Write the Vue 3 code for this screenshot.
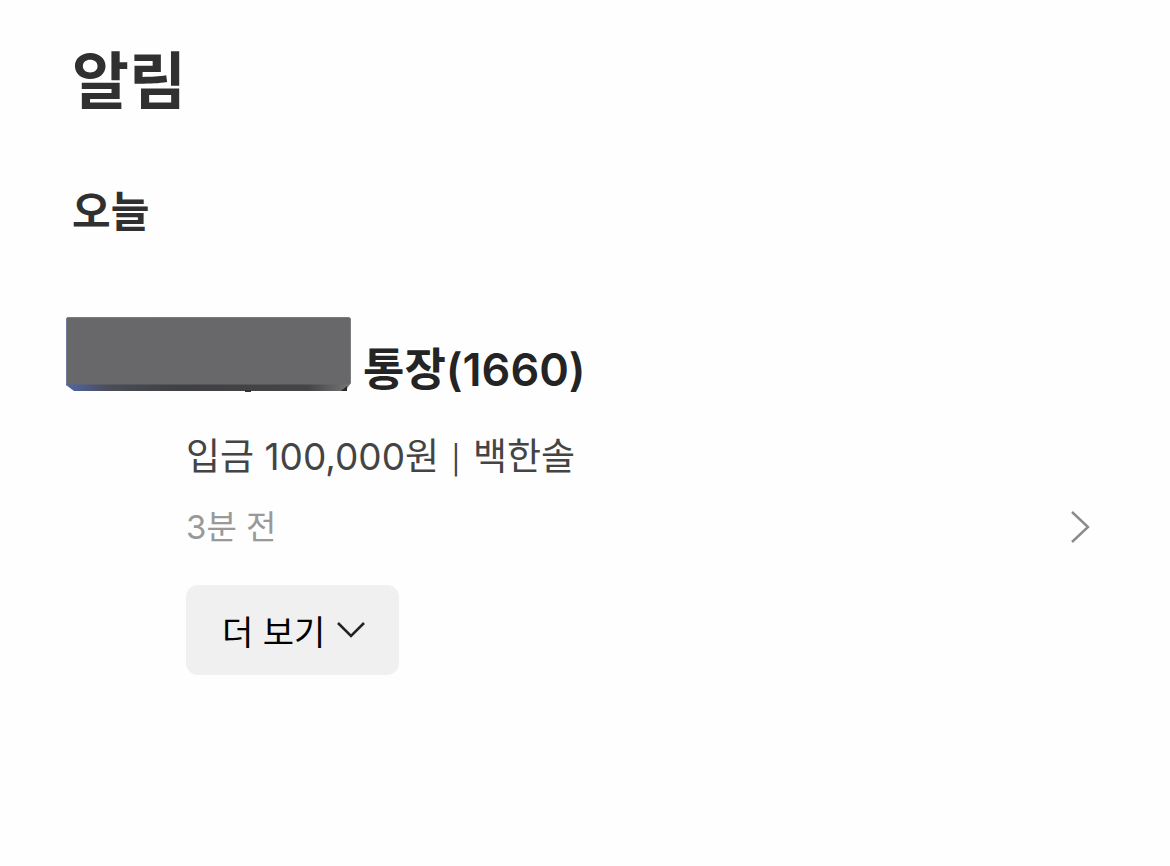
<script setup>
import { ref } from 'vue';

const days = ref([
    {
        "nev": "오늘",
        "items": [
            {
                "id": 1,
                "account": "통장(1660)",
                "text": "입금 100,000원",
                "sender": "백한솔",
                "time": "3분 전"
            }
        ]
    }
])
</script>
<template>
    <main class="page">
        <h1>알림</h1>
        <section v-for="day in days" :key="day.nev">
            <h2>{{ day.nev }}</h2>
            <article v-for="item in day.items" :key="item.id">
                <div class="titleRow">
                    <svg class="mask" viewBox="0 0 285 76" aria-hidden="true">
                        <defs>
                            <linearGradient id="edge">
                                <stop offset="0" stop-color="#5066a8" />
                                <stop offset="0.15" stop-color="#4a4c58" />
                                <stop offset="0.4" stop-color="#3f4043" />
                                <stop offset="0.85" stop-color="#454547" />
                                <stop offset="1" stop-color="#77777a" />
                            </linearGradient>
                        </defs>
                        <path d="M0 66H285L279 74H8L0 68Z" fill="url(#edge)" />
                        <path d="M275 74L281 69V74Z" fill="#29292b" />
                        <rect x="179" y="73" width="6" height="2" fill="#333335" />
                        <rect x="0.5" y="0.5" width="284" height="67" rx="2" fill="#68686a" />
                        <path d="M85 0.5H282Q284.5 0.5 284.5 2V66" stroke="#7b7b7e" fill="none" />
                        <path d="M0.5 67V2Q0.5 0.5 2 0.5H85" stroke="#717c9c" fill="none" />
                    </svg>
                    <h3>{{ item.account }}</h3>
                </div>
                <div class="body">
                    <p class="text">{{ item.text }} <span class="bar">|</span> {{ item.sender }}</p>
                    <div class="timeRow">
                        <p class="time">{{ item.time }}</p>
                        <a href="#" class="goBtn" aria-label="상세 보기">
                            <svg width="20" height="32" viewBox="0 0 20 32">
                                <path d="M2 1L18 16L2 31" fill="none" stroke="#8b8b8b" stroke-width="2.4" />
                            </svg>
                        </a>
                    </div>
                    <button type="button" class="moreBtn">
                        더 보기
                        <svg width="28" height="18" viewBox="0 0 28 18">
                            <path d="M1 2L14 15L27 2" fill="none" stroke="#242424" stroke-width="2.6" />
                        </svg>
                    </button>
                </div>
            </article>
        </section>
    </main>
</template>
<style>
body {
    margin: 0;
    background-color: #fefefe;
}
</style>
<style scoped>
.page {
    padding: 38px 80px 80px 72px;
    font-family: Inter, "Noto Sans CJK KR", sans-serif;
    color: #303030;
}

h1,
h2,
h3,
p {
    margin: 0;
}

h1 {
    font-size: 62px;
    line-height: 88px;
    font-weight: 700;
}

h2 {
    margin-top: 56px;
    font-size: 42px;
    line-height: 60px;
    font-weight: 700;
}

article {
    margin-top: 75px;
}

.titleRow {
    display: flex;
    align-items: flex-start;
    gap: 12px;
    margin-left: -6px;
}

.mask {
    width: 285px;
    height: 76px;
    flex: none;
}

h3 {
    margin-top: 21px;
    font-size: 45px;
    line-height: 64px;
    font-weight: 600;
    color: #242424;
}

.body {
    margin-top: 27px;
    padding-left: 114px;
}

.text {
    font-size: 37px;
    line-height: 56px;
    color: #444444;
}

.bar {
    display: inline-block;
    width: 13px;
    font-size: 28px;
    line-height: 36px;
    text-align: center;
}

.timeRow {
    display: flex;
    justify-content: space-between;
    align-items: center;
    margin-top: 14px;
}

.time {
    font-size: 33px;
    line-height: 56px;
    color: #999999;
}

.goBtn {
    display: flex;
}

.moreBtn {
    display: flex;
    align-items: center;
    gap: 12px;
    height: 90px;
    margin-top: 30px;
    padding: 0 34px 0 36px;
    border: none;
    border-radius: 12px;
    background-color: #f0f0f0;
    font-family: inherit;
    font-size: 34px;
    color: #000000;
    cursor: pointer;
}
</style>
